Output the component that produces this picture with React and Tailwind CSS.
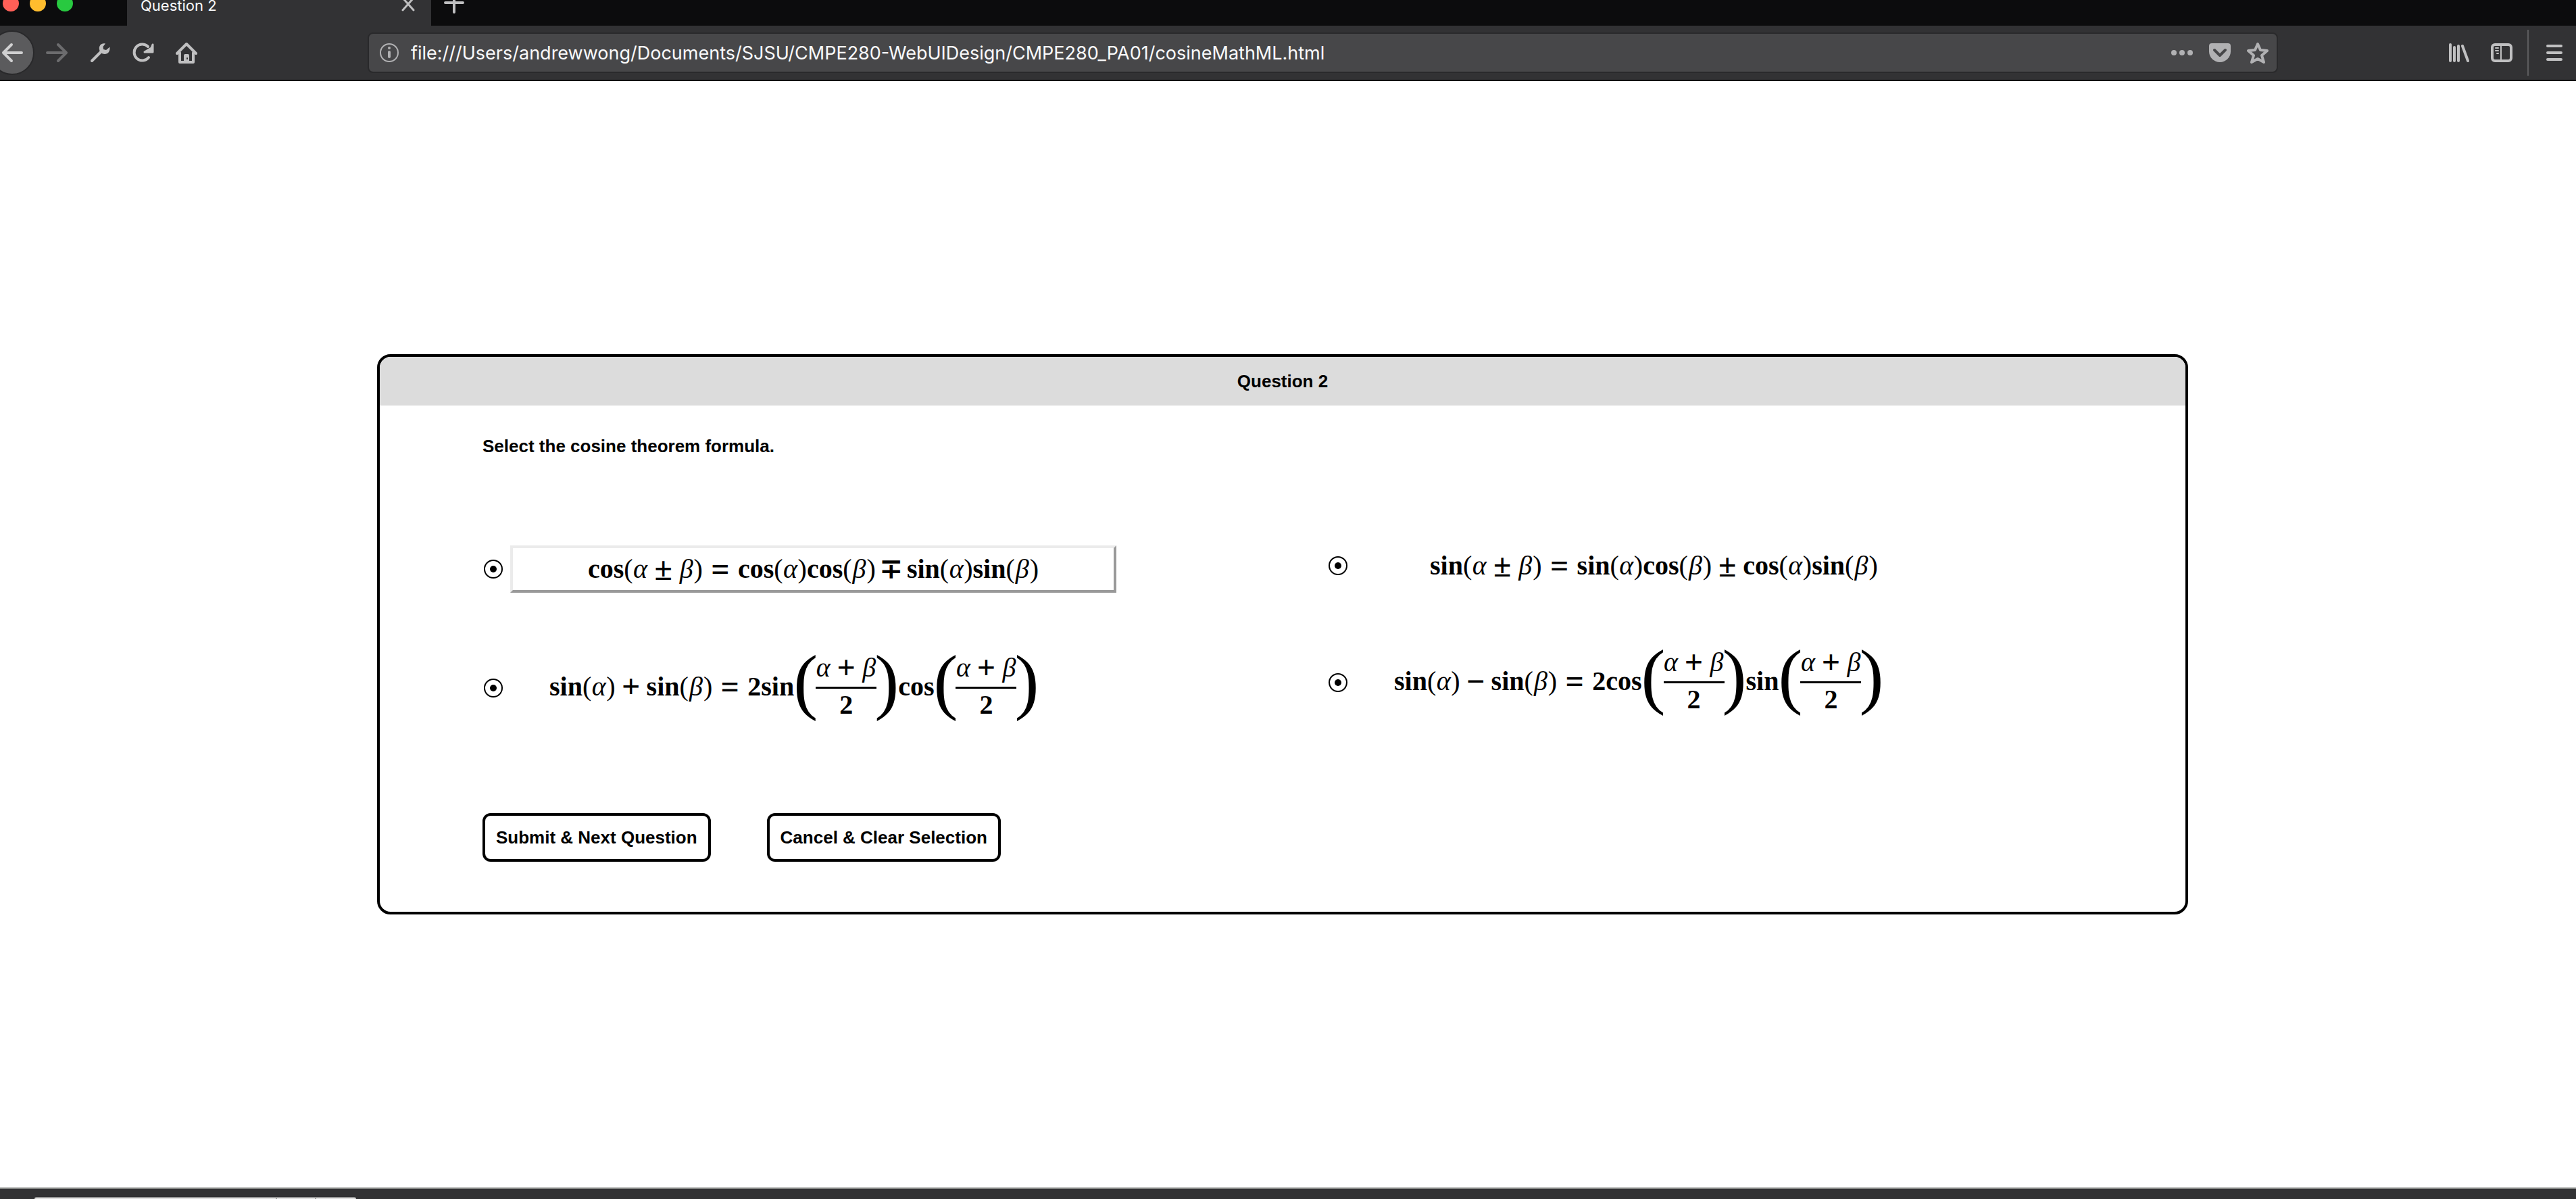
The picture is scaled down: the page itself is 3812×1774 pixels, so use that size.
import React from "react";

const Svg = ({ children, className = "" }) => (
  <svg
    viewBox="0 0 32 32"
    className={`size-8 shrink-0 ${className}`}
    fill="none"
    stroke="currentColor"
    strokeWidth="4"
    strokeLinecap="round"
    strokeLinejoin="round"
    aria-hidden="true"
  >
    {children}
  </svg>
);

function TabStrip() {
  return (
    <div className="-mt-7 flex h-[66px] items-center bg-[#0c0c0d]">
      <div className="flex w-[188px] gap-4 pl-1">
        <button aria-label="Close window" className="size-6 rounded-full bg-[#ff5f57]" />
        <button aria-label="Minimize window" className="size-6 rounded-full bg-[#ffbd2e]" />
        <button aria-label="Zoom window" className="size-6 rounded-full bg-[#28c940]" />
      </div>
      <div className="flex h-full w-[450px] items-center justify-between bg-[#323234] pr-[18px] pl-5 text-[22px] leading-6 text-[#f9f9fa]">
        <span className="pt-1.5">Question 2</span>
        <button aria-label="Close tab" className="text-[#c0c0c1]">
          <Svg>
            <path d="M8 8l16 18M24 8L8 26" strokeWidth="3" />
          </Svg>
        </button>
      </div>
      <button aria-label="New tab" className="ml-[18px] text-[#c0c0c1]">
        <Svg>
          <path d="M16 3v26M3 15h26" />
        </Svg>
      </button>
    </div>
  );
}

function Toolbar() {
  return (
    <div className="flex h-[82px] items-center border-b-2 border-black bg-[#323234] pr-4 text-[#c0c0c1]">
      <button
        aria-label="Back"
        className="-ml-[15px] flex size-[66px] shrink-0 items-center justify-center rounded-full border-2 border-[#29292b] bg-[#5b5b5d] text-[#d0d0d1]"
      >
        <Svg>
          <path d="M30 16H3M15 4L3 16l12 12" />
        </Svg>
      </button>
      <button aria-label="Forward" className="ml-[17px] text-[#6c6c6e]">
        <Svg>
          <path d="M2 16h28M18 4l12 12-12 12" />
        </Svg>
      </button>
      <div className="ml-8 flex gap-8">
        <button aria-label="Developer tools">
          <Svg>
            <path d="M4 28L18 14" />
            <path
              d="M24 2.5c-6-1.500-10 3-9 8.500.5 4 3.500 7 8 7 5 0 8-4 7.500-10.500l-5.500 4.500-4-1-.5-4z"
              fill="currentColor"
              stroke="none"
            />
          </Svg>
        </button>
        <button aria-label="Reload">
          <Svg>
            <path d="M24 23A12 12 0 1 1 23 7" />
            <path d="M30 4v11H18l10-6z" fill="currentColor" strokeWidth="3" />
          </Svg>
        </button>
        <button aria-label="Home">
          <Svg>
            <path d="M2 17L16 3l14 14" />
            <path d="M6 16v14h20V16" />
            <path d="M12 30V20q0-2 2-2h4q2 0 2 2v10z" fill="currentColor" stroke="none" />
            <path d="M17 24v1" stroke="#323234" strokeWidth="2" />
          </Svg>
        </button>
      </div>
      <div className="mr-[251px] ml-[252px] flex h-[60px] flex-1 items-center rounded-lg border-2 border-[#29292b] bg-[#474749] pr-3 pl-[14px] text-[#b1b1b3]">
        <button aria-label="Site information">
          <Svg>
            <circle cx="16" cy="16" r="13" strokeWidth="2" />
            <path d="M16 15v7" />
            <path d="M16 9v0" />
          </Svg>
        </button>
        <input
          aria-label="Address"
          readOnly
          className="ml-4 min-w-0 flex-1 bg-transparent pt-0.5 text-[27px] leading-9 text-[#f9f9fa] outline-none"
          value="file:///Users/andrewwong/Documents/SJSU/CMPE280-WebUIDesign/CMPE280_PA01/cosineMathML.html"
        />
        <div className="flex gap-6">
          <button aria-label="Page actions">
            <Svg>
              <g fill="currentColor" stroke="none">
                <circle cx="4" cy="16" r="4" />
                <circle cx="16" cy="16" r="4" />
                <circle cx="28" cy="16" r="4" />
              </g>
            </Svg>
          </button>
          <button aria-label="Save to Pocket">
            <Svg>
              <path d="M4 2h24q4 0 4 4v8a16 16 0 0 1-32 0V6q0-4 4-4z" fill="currentColor" stroke="none" />
              <path d="M8 12l8 8 8-8" stroke="#474749" />
            </Svg>
          </button>
          <button aria-label="Bookmark this page">
            <Svg>
              <path d="M16 3l4 9 10 1-8 7 3 10-9-5-9 5 3-10-8-7 10-1z" />
            </Svg>
          </button>
        </div>
      </div>
      <div className="flex items-center gap-8">
        <button aria-label="Library">
          <Svg>
            <path d="M4 4v24M10 8v20M16 6v22M22 6l8 22" />
          </Svg>
        </button>
        <button aria-label="Sidebars">
          <Svg>
            <rect x="2" y="4" width="28" height="24" rx="4" />
            <path d="M15 4v24M7 9h4M7 13h4M9 17h2" strokeWidth="2" />
          </Svg>
        </button>
      </div>
      <div className="mx-[22px] h-[68px] w-0.5 bg-[#5c5c5e]" />
      <button aria-label="Open menu">
        <Svg>
          <path d="M6 6h20M6 16h20M6 26h20" />
        </Svg>
      </button>
    </div>
  );
}

const Alpha = () => <i className="inline-block w-[22px] text-center font-normal">α</i>;
const Beta = () => <i className="inline-block w-[22px] text-center font-normal">β</i>;
const Op = ({ children }) => (
  <span className="inline-block w-[46px] text-center align-[-3px] text-[48px] leading-10">
    {children}
  </span>
);
const MinusPlus = () => <span className="inline-block w-[46px] text-center">∓</span>;
const Eq = () => (
  <span className="inline-block w-[52px] text-center align-[-3px] text-[48px] leading-10">=</span>
);
const Fn = ({ name, children }) => (
  <>
    {name}
    <span className="font-normal">(</span>
    {children}
    <span className="font-normal">)</span>
  </>
);
const Fence = ({ children }) => (
  <span className="flex w-[30px] justify-center pb-5 text-[108px] leading-[97px] font-normal">
    {children}
  </span>
);

function Half() {
  return (
    <span className="mx-0.5 flex items-center">
      <Fence>(</Fence>
      <span className="flex w-[90px] flex-col items-center">
        <span className="pb-2 leading-10 whitespace-nowrap">
          <Alpha />
          <Op>+</Op>
          <Beta />
        </span>
        <span className="h-[3px] w-full bg-black" />
        <span className="py-1 leading-10">2</span>
      </span>
      <Fence>)</Fence>
    </span>
  );
}

function Option({ id, className = "", formulaClass = "", children }) {
  return (
    <div className={`flex items-center ${className}`}>
      <input
        type="radio"
        id={id}
        name={id}
        defaultChecked
        className="ml-0.5 flex size-7 shrink-0 appearance-none items-center justify-center rounded-full border-2 border-black before:size-[10px] before:rounded-full before:bg-black"
      />
      <label
        htmlFor={id}
        className={`flex items-center font-['Liberation_Serif',serif] text-[40px] leading-[44px] font-bold whitespace-nowrap ${formulaClass}`}
      >
        {children}
      </label>
    </div>
  );
}

function QuestionCard() {
  return (
    <form
      onSubmit={(e) => e.preventDefault()}
      className="w-[70.6%] overflow-hidden rounded-[20px] border-4 border-black bg-white font-['Liberation_Sans',sans-serif] text-[26px] leading-8 font-bold text-black"
    >
      <h1 className="bg-[#dcdcdc] py-5 text-center">Question 2</h1>
      <div className="pt-11 pr-5 pb-[74px] pl-[152px]">
        <p>Select the cosine theorem formula.</p>
        <div className="mt-[131px] grid grid-cols-2">
          <div>
            <Option
              id="cos-sum"
              formulaClass="ml-[11px] h-[70px] w-[897px] justify-center border-4 border-t-[#ebebeb] border-r-[#999] border-b-[#999] border-l-[#ebebeb]"
            >
              <span>
                <Fn name="cos"><Alpha /><Op>±</Op><Beta /></Fn>
                <Eq />
                <Fn name="cos"><Alpha /></Fn>
                <Fn name="cos"><Beta /></Fn>
                <MinusPlus />
                <Fn name="sin"><Alpha /></Fn>
                <Fn name="sin"><Beta /></Fn>
              </span>
            </Option>
            <Option id="sin-plus" className="mt-[92px] h-[97px]" formulaClass="ml-[69px]">
              <span className="pb-1">
                <Fn name="sin"><Alpha /></Fn>
                <Op>+</Op>
                <Fn name="sin"><Beta /></Fn>
                <Eq />
                2sin
              </span>
              <Half />
              <span className="pb-1">cos</span>
              <Half />
            </Option>
          </div>
          <div>
            <Option id="sin-sum" className="h-[60px]" formulaClass="ml-[122px]">
              <span>
                <Fn name="sin"><Alpha /><Op>±</Op><Beta /></Fn>
                <Eq />
                <Fn name="sin"><Alpha /></Fn>
                <Fn name="cos"><Beta /></Fn>
                <Op>±</Op>
                <Fn name="cos"><Alpha /></Fn>
                <Fn name="sin"><Beta /></Fn>
              </span>
            </Option>
            <Option id="sin-minus" className="mt-[94px] h-[97px]" formulaClass="ml-[69px]">
              <span className="pb-1">
                <Fn name="sin"><Alpha /></Fn>
                <Op>−</Op>
                <Fn name="sin"><Beta /></Fn>
                <Eq />
                2cos
              </span>
              <Half />
              <span className="pb-1">sin</span>
              <Half />
            </Option>
          </div>
        </div>
        <div className="mt-[137px] flex gap-[83px]">
          <button type="submit" className="h-[72px] rounded-xl border-4 border-black px-4">
            Submit &amp; Next Question
          </button>
          <button type="reset" className="h-[72px] rounded-xl border-4 border-black px-4">
            Cancel &amp; Clear Selection
          </button>
        </div>
      </div>
    </form>
  );
}

export default function App() {
  return (
    <div className="flex min-h-screen flex-col overflow-hidden bg-white font-[Inter,sans-serif]">
      <header>
        <TabStrip />
        <Toolbar />
      </header>
      <main className="flex flex-1 items-center justify-center pr-4">
        <QuestionCard />
      </main>
      <footer className="border-t-2 border-[#858785] bg-[#323234] pt-3 pl-[51px]">
        <div className="flex h-[3px] w-[476px] rounded-t-sm border-t-2 border-[#999] bg-[#f2f2f2]">
          <div className="w-[359px] border-r-2 border-[#999]" />
          <div className="w-[58px] border-r-2 border-[#999]" />
        </div>
      </footer>
    </div>
  );
}
